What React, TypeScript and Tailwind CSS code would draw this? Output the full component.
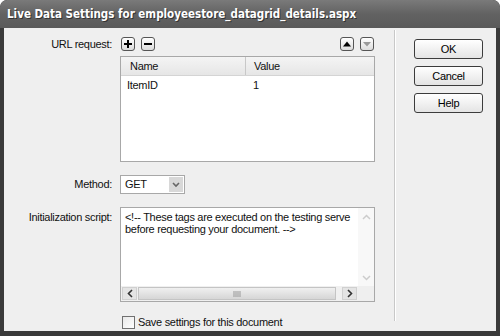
import React from "react";

const font = { fontFamily: '"Liberation Sans", Arial, sans-serif' };

function SmallBtn({ children }: { children: React.ReactNode }) {
  return (
    <div className="w-[14px] h-[14px] rounded-[3px] border border-[#555] bg-gradient-to-b from-[#ffffff] to-[#dcdcdc] flex items-center justify-center">
      {children}
    </div>
  );
}

function DlgBtn({ label }: { label: string }) {
  return (
    <div className="w-[69px] h-[20px] rounded-[3px] border border-[#3c3c3c] bg-gradient-to-b from-[#ffffff] to-[#e4e4e4] flex items-center justify-center text-[11px] text-black">
      {label}
    </div>
  );
}

export default function App() {
  return (
    <div className="w-[500px] h-[336px] bg-[#3a3a3a] rounded-t-[7px] flex flex-col px-[4px] pb-[6px] overflow-hidden" style={font}>
      <div className="h-[28px] shrink-0 bg-gradient-to-b from-[#7a7a7a] via-[#626262] to-[#5a5a5a] -mx-[4px] rounded-t-[7px] flex items-center pl-[7px] pt-[1px]">
        <span className="text-white font-bold text-[11.5px] [text-shadow:1px_1px_0_#333]" style={{ fontFamily: '"DejaVu Sans Condensed", "DejaVu Sans", sans-serif' }}>
          Live Data Settings for employeestore_datagrid_details.aspx
        </span>
      </div>
      <div className="flex-1 bg-[#efefef] flex text-[11px] text-[#111] tracking-[-0.3px]">
        {/* left form */}
        <div className="w-[372px] flex flex-col pt-[9px]">
          <div className="flex items-center h-[14px]">
            <div className="w-[108px] text-right">URL request:</div>
            <div className="ml-[9px] flex gap-[6px]">
              <SmallBtn>
                <svg width="10" height="10" viewBox="0 0 10 10"><path d="M5 1v8M1 5h8" stroke="#000" strokeWidth="2" /></svg>
              </SmallBtn>
              <SmallBtn>
                <svg width="10" height="10" viewBox="0 0 10 10"><path d="M1 5h8" stroke="#000" strokeWidth="2" /></svg>
              </SmallBtn>
            </div>
            <div className="ml-auto mr-[2px] flex gap-[6px]">
              <SmallBtn>
                <svg width="10" height="10" viewBox="0 0 10 10"><path d="M1 7.5h8L5 2.5z" fill="#000" /></svg>
              </SmallBtn>
              <SmallBtn>
                <svg width="10" height="10" viewBox="0 0 10 10"><path d="M1 3h8L5 7.5z" fill="#999" /></svg>
              </SmallBtn>
            </div>
          </div>
          {/* table */}
          <div className="ml-[116px] mt-[5px] w-[255px] h-[106px] border border-[#a8a8a8] bg-white flex flex-col">
            <div className="h-[19px] flex bg-gradient-to-b from-[#f4f4f4] to-[#e6e6e6] border-b border-[#d4d4d4]">
              <div className="w-[125px] pl-[9px] flex items-center border-r border-[#c8c8c8]">Name</div>
              <div className="flex-1 pl-[8px] flex items-center">Value</div>
            </div>
            <div className="flex h-[18px] items-center">
              <div className="w-[125px] pl-[6px]">ItemID</div>
              <div className="flex-1 pl-[7px]">1</div>
            </div>
          </div>
          {/* method */}
          <div className="flex items-center mt-[13px] h-[19px]">
            <div className="w-[108px] text-right">Method:</div>
            <div className="ml-[8px] w-[65px] h-[19px] border border-[#a8a8a8] bg-white flex items-center">
              <span className="pl-[4px] flex-1">GET</span>
              <div className="w-[14px] h-[15px] mr-[1px] bg-[#d8d8d8] flex items-center justify-center">
                <svg width="8" height="6" viewBox="0 0 8 6"><path d="M1 1l3 3 3-3" stroke="#666" strokeWidth="1.6" fill="none" /></svg>
              </div>
            </div>
          </div>
          {/* init script */}
          <div className="flex mt-[13px]">
            <div className="w-[108px] text-right pt-[2px]">Initialization script:</div>
            <div className="ml-[8px] w-[255px] h-[95px] border border-[#a8a8a8] bg-white flex flex-col">
              <div className="flex flex-1">
                <div className="flex-1 pl-[4px] pt-[3px] leading-[12px] whitespace-nowrap overflow-hidden">
                  <div>&lt;!-- These tags are executed on the testing serve</div>
                  <div>before requesting your document. --&gt;</div>
                </div>
                <div className="w-[16px] flex flex-col justify-between py-[1px] bg-[#f8f8f8]">
                  <div className="h-[15px] flex items-center justify-center">
                    <svg width="9" height="6" viewBox="0 0 9 6"><path d="M1 5l3.5-3.5L8 5" stroke="#ccc" strokeWidth="1.5" fill="none" /></svg>
                  </div>
                  <div className="h-[15px] flex items-center justify-center">
                    <svg width="9" height="6" viewBox="0 0 9 6"><path d="M1 1l3.5 3.5L8 1" stroke="#ccc" strokeWidth="1.5" fill="none" /></svg>
                  </div>
                </div>
              </div>
              <div className="h-[15px] flex">
                <div className="flex-1 flex items-center px-[1px] gap-[1px] bg-[#f0f0f0]">
                  <div className="w-[15px] h-[13px] bg-[#e4e4e4] border border-[#d0d0d0] flex items-center justify-center">
                    <svg width="6" height="9" viewBox="0 0 6 9"><path d="M5 1L1.5 4.5 5 8" stroke="#333" strokeWidth="1.6" fill="none" /></svg>
                  </div>
                  <div className="flex-1 h-[13px] bg-gradient-to-b from-[#f0f0f0] to-[#d6d6d6] border border-[#c4c4c4] flex items-center justify-center mr-[5px]">
                    <svg width="8" height="6" viewBox="0 0 8 6"><path d="M1 0v6M3 0v6M5 0v6M7 0v6" stroke="#999" strokeWidth="1" /></svg>
                  </div>
                  <div className="w-[15px] h-[13px] bg-[#e4e4e4] border border-[#d0d0d0] flex items-center justify-center">
                    <svg width="6" height="9" viewBox="0 0 6 9"><path d="M1 1l3.5 3.5L1 8" stroke="#333" strokeWidth="1.6" fill="none" /></svg>
                  </div>
                </div>
                <div className="w-[16px] bg-[#efefef]" />
              </div>
            </div>
          </div>
          {/* checkbox */}
          <div className="flex items-center mt-[12px] ml-[118px] gap-[3px]">
            <div className="w-[13px] h-[13px] border border-[#707070] bg-gradient-to-br from-[#e8e8e8] to-[#ffffff]" />
            <span>Save settings for this document</span>
          </div>
        </div>
        {/* separator */}
        <div className="ml-[18px] mt-[2px] mb-[10px] w-[2px] border-l border-[#c8c8c8] border-r border-r-white" />
        {/* right buttons */}
        <div className="ml-[18px] pt-[11px] flex flex-col gap-[7px]">
          <DlgBtn label="OK" />
          <DlgBtn label="Cancel" />
          <DlgBtn label="Help" />
        </div>
      </div>
    </div>
  );
}
